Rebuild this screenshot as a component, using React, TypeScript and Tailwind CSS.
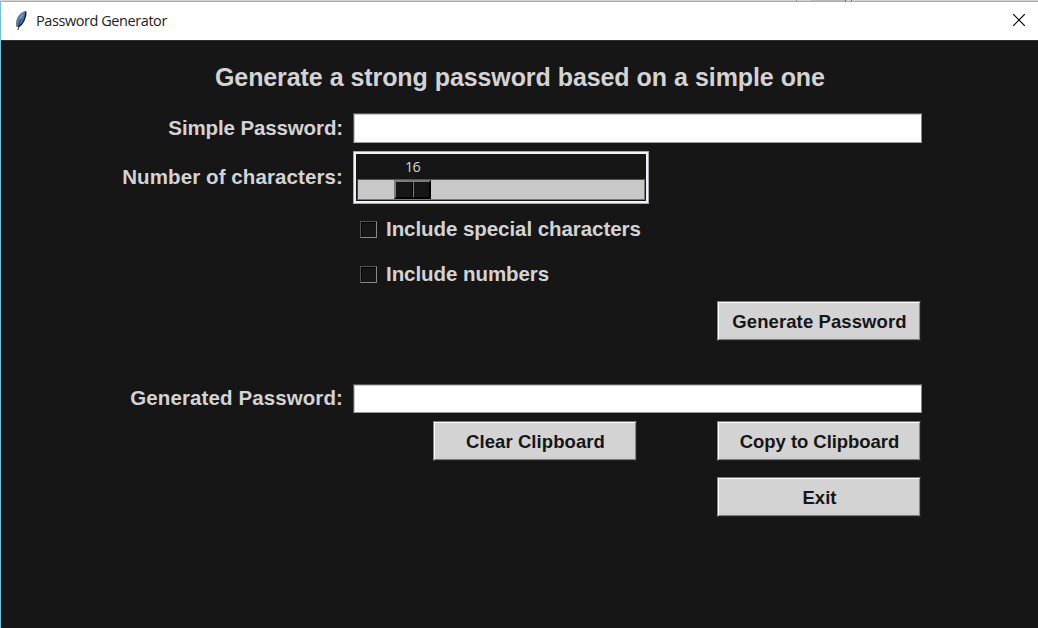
import type { ReactNode } from "react";

function Feather() {
  return (
    <svg width="14" height="20" viewBox="0 0 14 20" className="block">
      <path d="M11.800 .5C8 1 4.500 4.500 3.300 8.500c-.8 2.600-.9 5-.6 7.200l1.500.4c2.500-1.500 4.500-3.800 5.700-6.600 1.300-3 2.200-6.200 1.900-9z" fill="#4a80bd" />
      <path d="M11.800.5C8 1 4.500 4.500 3.300 8.500c-.8 2.600-.9 5-.6 7.200" fill="none" stroke="#777b82" strokeWidth="1.200" />
      <path d="M11.800.7c.3 2.800-.6 5.800-1.900 8.800-1.200 2.800-3.200 5-5.700 6.500" fill="none" stroke="#20242e" strokeWidth="1.600" />
      <path d="M9.500 4.500C6.500 8 5 12 4 19" fill="none" stroke="#2b3038" strokeWidth="1" />
      <path d="M9.200 3.500 6.200 7.800" stroke="#8cb9e8" strokeWidth="1.200" />
    </svg>
  );
}

function CloseIcon() {
  return (
    <svg width="12" height="12" viewBox="0 0 12 12" className="block" stroke="#000" strokeWidth="1.200">
      <path d="M0 0 12 12M12 0 0 12" />
    </svg>
  );
}

function Label({ children, className = "tracking-[0.100px]" }: { children: ReactNode; className?: string }) {
  return <div className={`w-[342px] shrink-0 text-right text-[20.500px] leading-[24px] ${className}`}>{children}</div>;
}

function Entry({ label }: { label: string }) {
  return (
    <input
      aria-label={label}
      className="ml-[10px] h-full w-[569px] border border-t-[#555] border-r-[#888] border-b-[#999] border-l-[#555] bg-white px-1 text-black shadow-[inset_1px_1px_0_#ccc] outline-none"
    />
  );
}

function Button({ children, className = "" }: { children: ReactNode; className?: string }) {
  return (
    <button className="h-[40px] w-[204px] shrink-0 border border-t-[#777] border-r-[#222] border-b-[#222] border-l-[#888] bg-[#777]">
      <span className={`flex h-full items-center justify-center border border-t-white border-r-[#888] border-b-[#777] border-l-white bg-[#d3d3d3] pt-[2px] pl-px text-[18.500px] leading-[22px] text-[#161616] ${className}`}>
        {children}
      </span>
    </button>
  );
}

function Check({ children }: { children: ReactNode }) {
  return (
    <label className="ml-[359px] flex h-[24px] items-center">
      <span className="h-[17px] w-[17px] border border-t-[#555] border-r-[#888] border-b-[#888] border-l-[#555]">
        <span className="block h-full border-t border-l border-black" />
      </span>
      <span className="ml-[9px] text-[20.500px] leading-[24px] tracking-[-0.060px]">{children}</span>
    </label>
  );
}

function Scale() {
  return (
    <div className="ml-[10px] flex h-[53px] w-[296px] flex-col border border-[#a9a7ab] bg-[#161616]">
      <div className="flex h-full flex-col border-2 border-[#f3f1f5] px-px">
        <div className="h-[25px] pt-[4px] pl-[48px] font-['Open_Sans',sans-serif] text-[14.500px] leading-[18px] font-normal tracking-[-0.700px]">16</div>
        <div className="flex h-[21px] border border-t-[#555] border-r-[#777] border-b-[#777] border-l-[#444] bg-[#c8c8c8] pl-[36px]">
          <div className="flex h-[19px] w-[37px] border-2 border-t-[#7d7d7d] border-r-black border-b-black border-l-[#7d7d7d] bg-[#161616]">
            <div className="h-full w-[17px] border-r border-black" />
            <div className="h-full w-px bg-[#7d7d7d]" />
          </div>
        </div>
      </div>
    </div>
  );
}

export default function App() {
  return (
    <div className="flex h-[628px] w-[1038px] flex-col overflow-hidden bg-[#161616] font-['Liberation_Sans',Arial,sans-serif] font-bold text-[#d3d3d3]">
      <div className="flex h-px shrink-0 bg-[#d6d3d0]">
        <div className="ml-[796px] h-px w-px bg-[#888]" />
        <div className="ml-[14px] h-px w-[34px] bg-[#bcbcbc]" />
        <div className="h-px w-px bg-[#555]" />
        <div className="ml-[5px] h-px w-px bg-[#555]" />
      </div>
      <div className="flex min-h-0 flex-1 flex-col border-t border-l border-[#67c5df]">
        <header className="flex h-[39px] shrink-0 items-center border-b border-b-[#303030] bg-white pr-[13px] pl-[13px]">
          <Feather />
          <span className="ml-[8px] font-['Open_Sans',sans-serif] text-[14.500px] leading-[20px] font-normal tracking-[-0.430px] text-[#222]">Password Generator</span>
          <span className="mb-[2px] ml-auto"><CloseIcon /></span>
        </header>
        <main className="flex flex-col">
          <h1 className="mt-[21px] ml-[214px] h-[30px] text-[25px] leading-[30px] tracking-[-0.110px] [word-spacing:0.300px] whitespace-nowrap">Generate a strong password based on a simple one</h1>
          <div className="mt-[21px] flex h-[30px] items-center">
            <Label className="tracking-[-0.120px]">Simple Password:</Label>
            <Entry label="Simple Password" />
          </div>
          <div className="mt-[8px] flex h-[53px] items-center">
            <div className="pb-[2px]"><Label>Number of characters:</Label></div>
            <Scale />
          </div>
          <div className="mt-[13px] flex flex-col gap-[21px]">
            <Check>Include special characters</Check>
            <Check>Include numbers</Check>
          </div>
          <div className="mt-[15px] ml-[716px] flex"><Button className="tracking-[0.100px]">Generate Password</Button></div>
          <div className="mt-[43px] flex h-[29px] items-center">
            <div className="pb-px"><Label>Generated Password:</Label></div>
            <Entry label="Generated Password" />
          </div>
          <div className="mt-[8px] ml-[432px] flex gap-[80px]">
            <Button className="tracking-[0.080px]">Clear Clipboard</Button>
            <Button className="tracking-[-0.050px]">Copy to Clipboard</Button>
          </div>
          <div className="mt-[16px] ml-[716px] flex"><Button>Exit</Button></div>
        </main>
      </div>
    </div>
  );
}
